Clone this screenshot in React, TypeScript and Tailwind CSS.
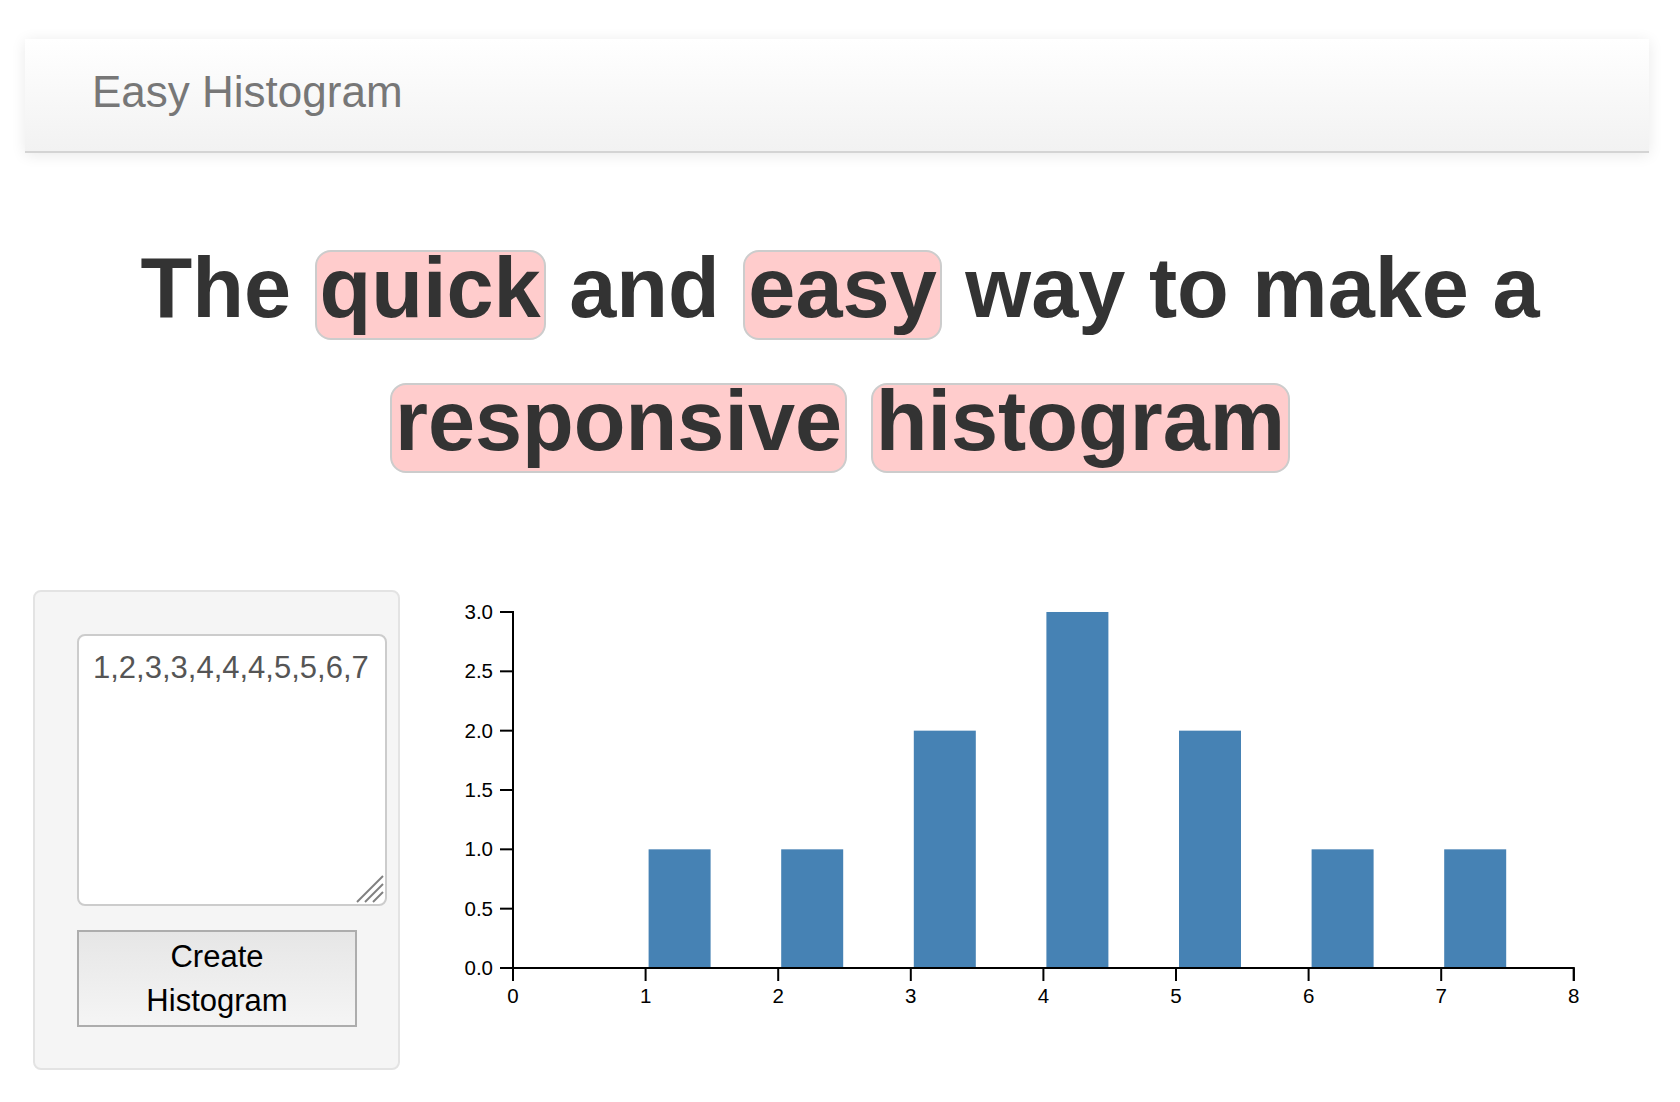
import React, { FC } from 'react'

const Pill: FC<{ children: React.ReactNode }> = ({ children }) => (
  <span className="inline-block rounded-[16px] border-2 border-[#cccccc] bg-[#ffcccc] px-[3px] pt-0 pb-[14px] leading-[72px]">
    {children}
  </span>
)

const counts: [number, number][] = [
  [1, 1],
  [2, 1],
  [3, 2],
  [4, 3],
  [5, 2],
  [6, 1],
  [7, 1],
]

const OX = 73
const OY = 378
const UX = 132.6
const UY = 118.67

const Chart: FC = () => {
  const yTicks = [0, 0.5, 1, 1.5, 2, 2.5, 3]
  const xTicks = [0, 1, 2, 3, 4, 5, 6, 7, 8]
  const xEnd = OX + 8 * UX
  return (
    <svg width="1200" height="450" className="block">
      {counts.map(([v, c]) => (
        <rect
          key={v}
          x={OX + v * UX + 3}
          y={OY - c * UY}
          width={62}
          height={c * UY}
          fill="#4682b4"
        />
      ))}
      <g fontFamily="'Liberation Sans', Arial, sans-serif" fontSize="20.5" fill="#000">
        {yTicks.map((t) => (
          <g key={t}>
            <line x1={OX - 13} x2={OX} y1={OY - t * UY} y2={OY - t * UY} stroke="#000" strokeWidth="2" />
            <text x={OX - 20} y={OY - t * UY + 7} textAnchor="end">
              {t.toFixed(1)}
            </text>
          </g>
        ))}
        {xTicks.map((t) => (
          <g key={t}>
            <line x1={OX + t * UX} x2={OX + t * UX} y1={OY} y2={OY + 13} stroke="#000" strokeWidth="2" />
            <text x={OX + t * UX} y={OY + 35} textAnchor="middle">
              {t}
            </text>
          </g>
        ))}
      </g>
      <path d={`M${OX - 13},${OY - 3 * UY}H${OX}V${OY}H${OX - 13}`} fill="none" stroke="#000" strokeWidth="2" />
      <path d={`M${OX},${OY + 13}V${OY}H${xEnd}V${OY + 13}`} fill="none" stroke="#000" strokeWidth="2" />
    </svg>
  )
}

const App: FC = () => {
  return (
    <div className="min-h-[1102px] w-[1680px] bg-white font-['Liberation_Sans',Arial,sans-serif]">
      <div className="pt-[39px] pl-[25px] pr-[31px]">
        <nav className="flex h-[114px] items-center border-b-2 border-[#d4d4d4] bg-gradient-to-b from-white to-[#f2f2f2] pb-[6px] pl-[67px] shadow-[0_2px_14px_rgba(0,0,0,0.09)]">
          <span className="text-[44px] text-[#777777]">Easy Histogram</span>
        </nav>
      </div>

      <h1 className="mt-[68px] text-center text-[84.7px] font-bold leading-[133px] text-[#333333]">
        The <Pill>quick</Pill> and <Pill>easy</Pill> way to make a
        <br />
        <Pill>responsive</Pill> <Pill>histogram</Pill>
      </h1>

      <div className="mt-[103px] flex items-start pl-[33px]">
        <div className="h-[480px] w-[367px] rounded-[8px] border-2 border-[#e3e3e3] bg-[#f5f5f5] pt-[42px] pl-[42px]">
          <div className="relative h-[272px] w-[310px]">
            <textarea
              defaultValue="1,2,3,3,4,4,4,5,5,6,7"
              className="block h-full w-full resize-none rounded-[8px] border-2 border-[#cccccc] bg-white pr-[10px] pl-[14px] pt-[12px] text-[31px] leading-[40px] text-[#555555] outline-none"
            />
            <svg className="absolute right-[3px] bottom-[3px]" width="28" height="28">
              <line x1="1" y1="27" x2="27" y2="1" stroke="#808080" strokeWidth="2" />
              <line x1="9" y1="27" x2="27" y2="9" stroke="#808080" strokeWidth="2" />
              <line x1="17" y1="27" x2="27" y2="17" stroke="#808080" strokeWidth="2" />
            </svg>
          </div>
          <button className="mt-[24px] block h-[97px] w-[280px] border-2 border-[#adadad] bg-gradient-to-b from-[#e6e6e6] to-[#f5f5f5] text-[31px] leading-[44px] text-black">
            Create
            <br />
            Histogram
          </button>
        </div>
        <div className="ml-[40px]">
          <Chart />
        </div>
      </div>
    </div>
  )
}

export default App
